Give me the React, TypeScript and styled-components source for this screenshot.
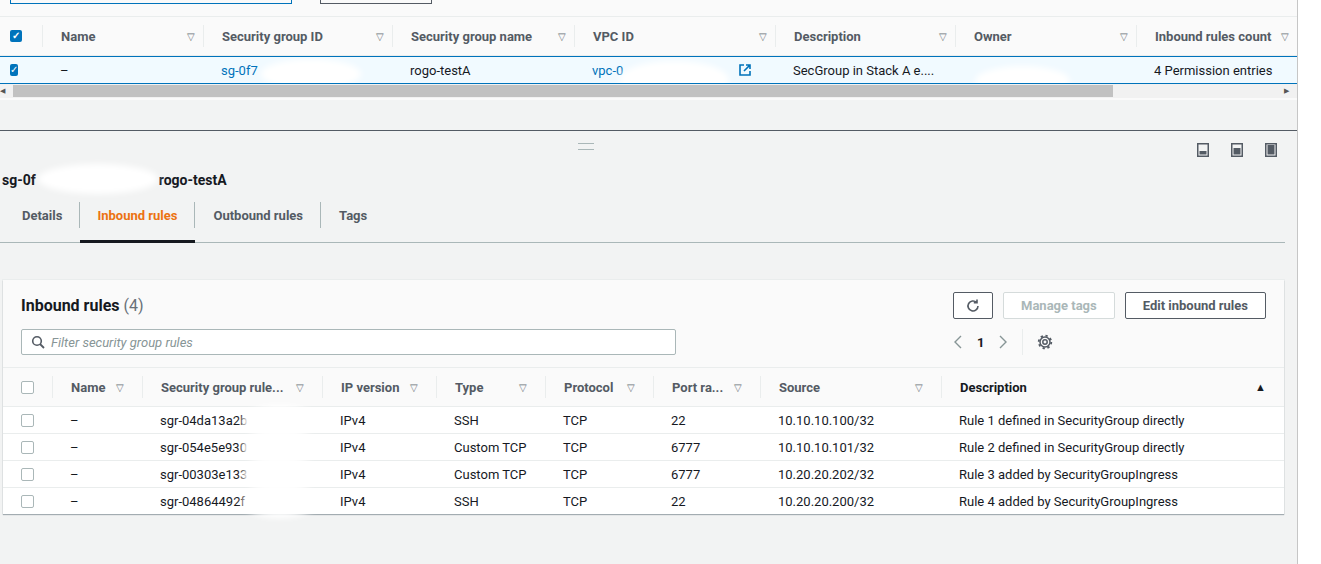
import React from 'react';
import styled, { createGlobalStyle } from 'styled-components';

const Global = createGlobalStyle`
  body { margin: 0; background: #fff; font-family: Roboto, "Liberation Sans", sans-serif; font-size: 13px; color: #16191f; }
`;

const Page = styled.div`
  width: 1297px;
  height: 564px;
  border-right: 1px solid #c6c6c6;
  background: #f2f3f3;
  overflow: hidden;
`;

const TopArea = styled.div`
  background: #fafafa;
  height: 100px;
  position: relative;
`;

const TopControls = styled.div`
  display: flex;
  gap: 28px;
  padding-left: 10px;
  height: 17px;
  border-bottom: 1px solid #eaeded;
  box-sizing: border-box;
`;

const SearchStub = styled.div<{ w: number; c: string }>`
  width: ${p => p.w}px;
  height: 4px;
  margin-top: -1px;
  border: 1px solid ${p => p.c};
  border-top: none;
`;

const TopGrid = styled.div<{ sel?: boolean }>`
  display: grid;
  grid-template-columns: 42px 161px 189px 182px 201px 180px 181px 161px;
  height: ${p => (p.sel ? 26 : 38)}px;
  align-items: center;
  background: ${p => (p.sel ? '#f1faff' : '#fafafa')};
  border-top: ${p => (p.sel ? '1px solid #0073bb' : 'none')};
  border-bottom: ${p => (p.sel ? '1px solid #0073bb' : '1px solid #eaeded')};
  overflow: hidden;
  white-space: nowrap;
`;

const HeadCell = styled.div<{ first?: boolean; sep?: boolean }>`
  display: flex;
  align-items: center;
  justify-content: space-between;
  padding: 0 ${p => (p.first ? 0 : 8)}px 0 ${p => (p.first ? 10 : 18)}px;
  font-weight: 700;
  color: #545b64;
  border-left: ${p => (p.sep ? '1px solid #eaeded' : 'none')};
  height: 22px;
`;

const Cell = styled.div<{ first?: boolean; link?: boolean }>`
  position: relative;
  padding-left: ${p => (p.first ? 10 : 18)}px;
  color: ${p => (p.link ? '#0073bb' : '#16191f')};
  display: flex;
  align-items: center;
  justify-content: space-between;
  padding-right: 24px;
`;

const Smudge = styled.span<{ l: number; w: number; t?: number; h?: number }>`
  position: absolute;
  left: ${p => p.l}px;
  top: ${p => p.t ?? -4}px;
  width: ${p => p.w}px;
  height: ${p => p.h ?? 30}px;
  background: #fff;
  border-radius: 50%;
  filter: blur(3px);
`;

const Caret = styled.span`
  font-size: 10px;
  color: #687078;
  font-weight: 400;
`;

const CheckOn = styled.span`
  display: inline-block;
  width: 12px;
  height: 12px;
  border-radius: 2px;
  background: #0073bb;
  color: #fff;
  font-size: 10px;
  line-height: 12px;
  text-align: center;
`;

const CheckOff = styled.span`
  display: inline-block;
  width: 11px;
  height: 11px;
  border: 1px solid #aab7b8;
  border-radius: 2px;
  background: #fff;
`;

const Scroll = styled.div`
  display: flex;
  align-items: center;
  height: 14px;
  background: #f1f1f1;
  font-size: 7px;
  color: #555;
`;

const Thumb = styled.div`
  margin-left: 8px;
  width: 1100px;
  height: 12px;
  background: #c1c1c1;
`;

const Divider = styled.div`
  margin-top: 30px;
  border-top: 1px solid #545b64;
  height: 31px;
  display: flex;
  align-items: center;
  justify-content: space-between;
  padding: 0 20px 0 578px;
`;

const Handle = styled.div`
  width: 16px;
  height: 5px;
  border-top: 1px solid #aab7b8;
  border-bottom: 1px solid #aab7b8;
  margin-top: -1px;
`;

const Icons = styled.div`
  display: flex;
  gap: 22px;
  margin-top: 6px;
`;

const Title = styled.div`
  position: relative;
  display: flex;
  font-size: 14px;
  font-weight: 700;
  margin-top: 10px;
  padding-left: 2px;
`;

const Gap = styled.span`
  position: relative;
  width: 123px;
`;

const Tabs = styled.div`
  display: flex;
  margin: 14px 12px 0 0;
  border-bottom: 1px solid #aab7b8;
  height: 40px;
`;

const Tab = styled.div<{ active?: boolean }>`
  display: flex;
  align-items: flex-start;
  padding: 6px 18px 0 ${p => (p.active ? 17 : 18)}px;
  font-weight: 700;
  color: ${p => (p.active ? '#ec7211' : '#545b64')};
  border-bottom: ${p => (p.active ? '3px solid #16191f' : '3px solid transparent')};
  margin-bottom: -1px;
  position: relative;
  &:first-child { padding-left: 22px; }
  &:not(:last-child)::after {
    content: '';
    position: absolute;
    right: 0;
    top: 0;
    height: 26px;
    border-right: 1px solid #aab7b8;
  }
`;

const Card = styled.div`
  margin: 37px 13px 0 3px;
  background: #fafafa;
  box-shadow: 0 1px 1px rgba(0, 22, 40, 0.3), 0 0 0 1px #eaeded;
`;

const CardHead = styled.div`
  display: grid;
  grid-template-columns: 1fr auto;
  padding: 12px 18px 12px 18px;
  row-gap: 10px;
  border-bottom: 1px solid #eaeded;
`;

const CardTitle = styled.div`
  font-size: 16px;
  font-weight: 700;
  padding-top: 4px;
  span { font-weight: 400; color: #687078; }
`;

const Buttons = styled.div`
  display: flex;
  gap: 10px;
`;

const Btn = styled.button<{ disabled?: boolean }>`
  height: 27px;
  font: 700 13px Roboto, "Liberation Sans", sans-serif;
  padding: 0 17px;
  background: #fff;
  color: ${p => (p.disabled ? '#aab7b8' : '#545b64')};
  border: 1px solid ${p => (p.disabled ? '#d5dbdb' : '#545b64')};
  border-radius: 2px;
  display: flex;
  align-items: center;
`;

const Filter = styled.div`
  width: 655px;
  height: 26px;
  box-sizing: border-box;
  border: 1px solid #aab7b8;
  background: #fff;
  border-radius: 2px;
  display: flex;
  align-items: center;
  gap: 6px;
  padding-left: 9px;
  color: #879596;
  font-style: italic;
`;

const Pager = styled.div`
  display: flex;
  align-items: center;
  gap: 14px;
  color: #879596;
  font-size: 24px;
  font-weight: 300;
  b { color: #16191f; font-size: 13px; font-weight: 700; }
`;

const Gear = styled.div`
  border-left: 1px solid #eaeded;
  padding-left: 14px;
  height: 26px;
  display: flex;
  align-items: center;
`;

const RuleGrid = styled.div<{ head?: boolean }>`
  display: grid;
  grid-template-columns: 49px 90px 180px 114px 109px 108px 107px 181px 1fr;
  height: ${p => (p.head ? 38 : 26)}px;
  align-items: center;
  background: ${p => (p.head ? '#fafafa' : '#fff')};
  border-bottom: 1px solid #eaeded;
  &:last-child { border-bottom: none; }
`;

const RCell = styled.div`
  position: relative;
  padding-left: 18px;
  display: flex;
  align-items: center;
`;

const RHead = styled(HeadCell)`
  padding: 0 18px 0 18px;
`;

const Sq = ({ fill }: { fill: number }) => (
  <svg width="12" height="14" viewBox="0 0 12 14">
    <rect x="0.75" y="0.75" width="10.5" height="12.5" fill="none" stroke="#545b64" strokeWidth="1.5" />
    <rect x="2.5" y={12 - fill} width="7" height={fill - 0.5} fill="#545b64" />
  </svg>
);

const rows = [
  ['sgr-04da13a2b', 'SSH', '22', '10.10.10.100/32', 'Rule 1 defined in SecurityGroup directly'],
  ['sgr-054e5e930', 'Custom TCP', '6777', '10.10.10.101/32', 'Rule 2 defined in SecurityGroup directly'],
  ['sgr-00303e133', 'Custom TCP', '6777', '10.20.20.202/32', 'Rule 3 added by SecurityGroupIngress'],
  ['sgr-04864492f', 'SSH', '22', '10.20.20.200/32', 'Rule 4 added by SecurityGroupIngress'],
];

const topHeads = ['Name', 'Security group ID', 'Security group name', 'VPC ID', 'Description', 'Owner', 'Inbound rules count'];
const ruleHeads = ['Name', 'Security group rule...', 'IP version', 'Type', 'Protocol', 'Port ra...', 'Source'];

export default function App() {
  return (
    <Page>
      <Global />
      <TopArea>
        <TopControls>
          <SearchStub w={280} c="#0073bb" />
          <SearchStub w={110} c="#545b64" />
        </TopControls>
        <TopGrid>
          <HeadCell first><CheckOn>✓</CheckOn></HeadCell>
          {topHeads.map(h => (
            <HeadCell key={h} sep>{h}<Caret>▽</Caret></HeadCell>
          ))}
        </TopGrid>
        <TopGrid sel>
          <Cell first><CheckOn>✓</CheckOn></Cell>
          <Cell>–</Cell>
          <Cell link>sg-0f7<Smudge l={58} w={100} /></Cell>
          <Cell>rogo-testA</Cell>
          <Cell link>vpc-0<Smudge l={45} w={110} t={-2} h={38} />
            <svg width="12" height="12" viewBox="0 0 12 12"><path d="M5 1H1v10h10V7M7 1h4v4M11 1 5 7" fill="none" stroke="#0073bb" strokeWidth="1.6" /></svg>
          </Cell>
          <Cell>SecGroup in Stack A e....</Cell>
          <Cell><Smudge l={20} w={95} /></Cell>
          <Cell>4 Permission entries</Cell>
        </TopGrid>
        <Scroll>◀<Thumb /><span style={{ marginLeft: 'auto', marginRight: 8 }}>▶</span></Scroll>
      </TopArea>
      <Divider>
        <Handle />
        <Icons><Sq fill={4} /><Sq fill={7} /><Sq fill={10} /></Icons>
      </Divider>
      <Title>sg-0f<Gap><Smudge l={2} w={120} t={-8} /></Gap>rogo-testA</Title>
      <Tabs>
        <Tab>Details</Tab>
        <Tab active>Inbound rules</Tab>
        <Tab>Outbound rules</Tab>
        <Tab>Tags</Tab>
      </Tabs>
      <Card>
        <CardHead>
          <CardTitle>Inbound rules <span>(4)</span></CardTitle>
          <Buttons>
            <Btn style={{ padding: '0 11px' }}>
              <svg width="16" height="16" viewBox="0 0 16 16"><path d="M13 8a5 5 0 1 1-1.5-3.6M12 1.5v3.2H8.8" fill="none" stroke="#545b64" strokeWidth="1.6" /></svg>
            </Btn>
            <Btn disabled>Manage tags</Btn>
            <Btn>Edit inbound rules</Btn>
          </Buttons>
          <Filter>
            <svg width="14" height="14" viewBox="0 0 14 14"><circle cx="6" cy="6" r="4.3" fill="none" stroke="#545b64" strokeWidth="1.6" /><path d="M9 9l4 4" stroke="#545b64" strokeWidth="1.8" /></svg>
            Filter security group rules
          </Filter>
          <Pager>
            <svg width="10" height="16" viewBox="0 0 10 16"><path d="M8 2 2 8l6 6" fill="none" stroke="#879596" strokeWidth="1.4" /></svg>
            <b>1</b>
            <svg width="10" height="16" viewBox="0 0 10 16"><path d="M2 2l6 6-6 6" fill="none" stroke="#879596" strokeWidth="1.4" /></svg>
            <Gear>
              <svg width="16" height="16" viewBox="0 0 16 16"><circle cx="8" cy="8" r="2.2" fill="none" stroke="#545b64" strokeWidth="1.5" /><circle cx="8" cy="8" r="5" fill="none" stroke="#545b64" strokeWidth="1.5" /><circle cx="8" cy="8" r="6.3" fill="none" stroke="#545b64" strokeWidth="1.8" strokeDasharray="2.3 2.6" /></svg>
            </Gear>
          </Pager>
        </CardHead>
        <div>
          <RuleGrid head>
            <RCell><CheckOff /></RCell>
            {ruleHeads.map(h => (
              <RHead key={h} sep>{h}<Caret>▽</Caret></RHead>
            ))}
            <RHead sep style={{ color: '#16191f' }}>Description<span style={{ fontSize: 11 }}>▲</span></RHead>
          </RuleGrid>
          {rows.map(r => (
            <RuleGrid key={r[0]}>
              <RCell><CheckOff /></RCell>
              <RCell>–</RCell>
              <RCell>{r[0]}<Smudge l={100} w={75} t={-8} h={32} /></RCell>
              <RCell>IPv4</RCell>
              <RCell>{r[1]}</RCell>
              <RCell>TCP</RCell>
              <RCell>{r[2]}</RCell>
              <RCell>{r[3]}</RCell>
              <RCell>{r[4]}</RCell>
            </RuleGrid>
          ))}
        </div>
      </Card>
    </Page>
  );
}
